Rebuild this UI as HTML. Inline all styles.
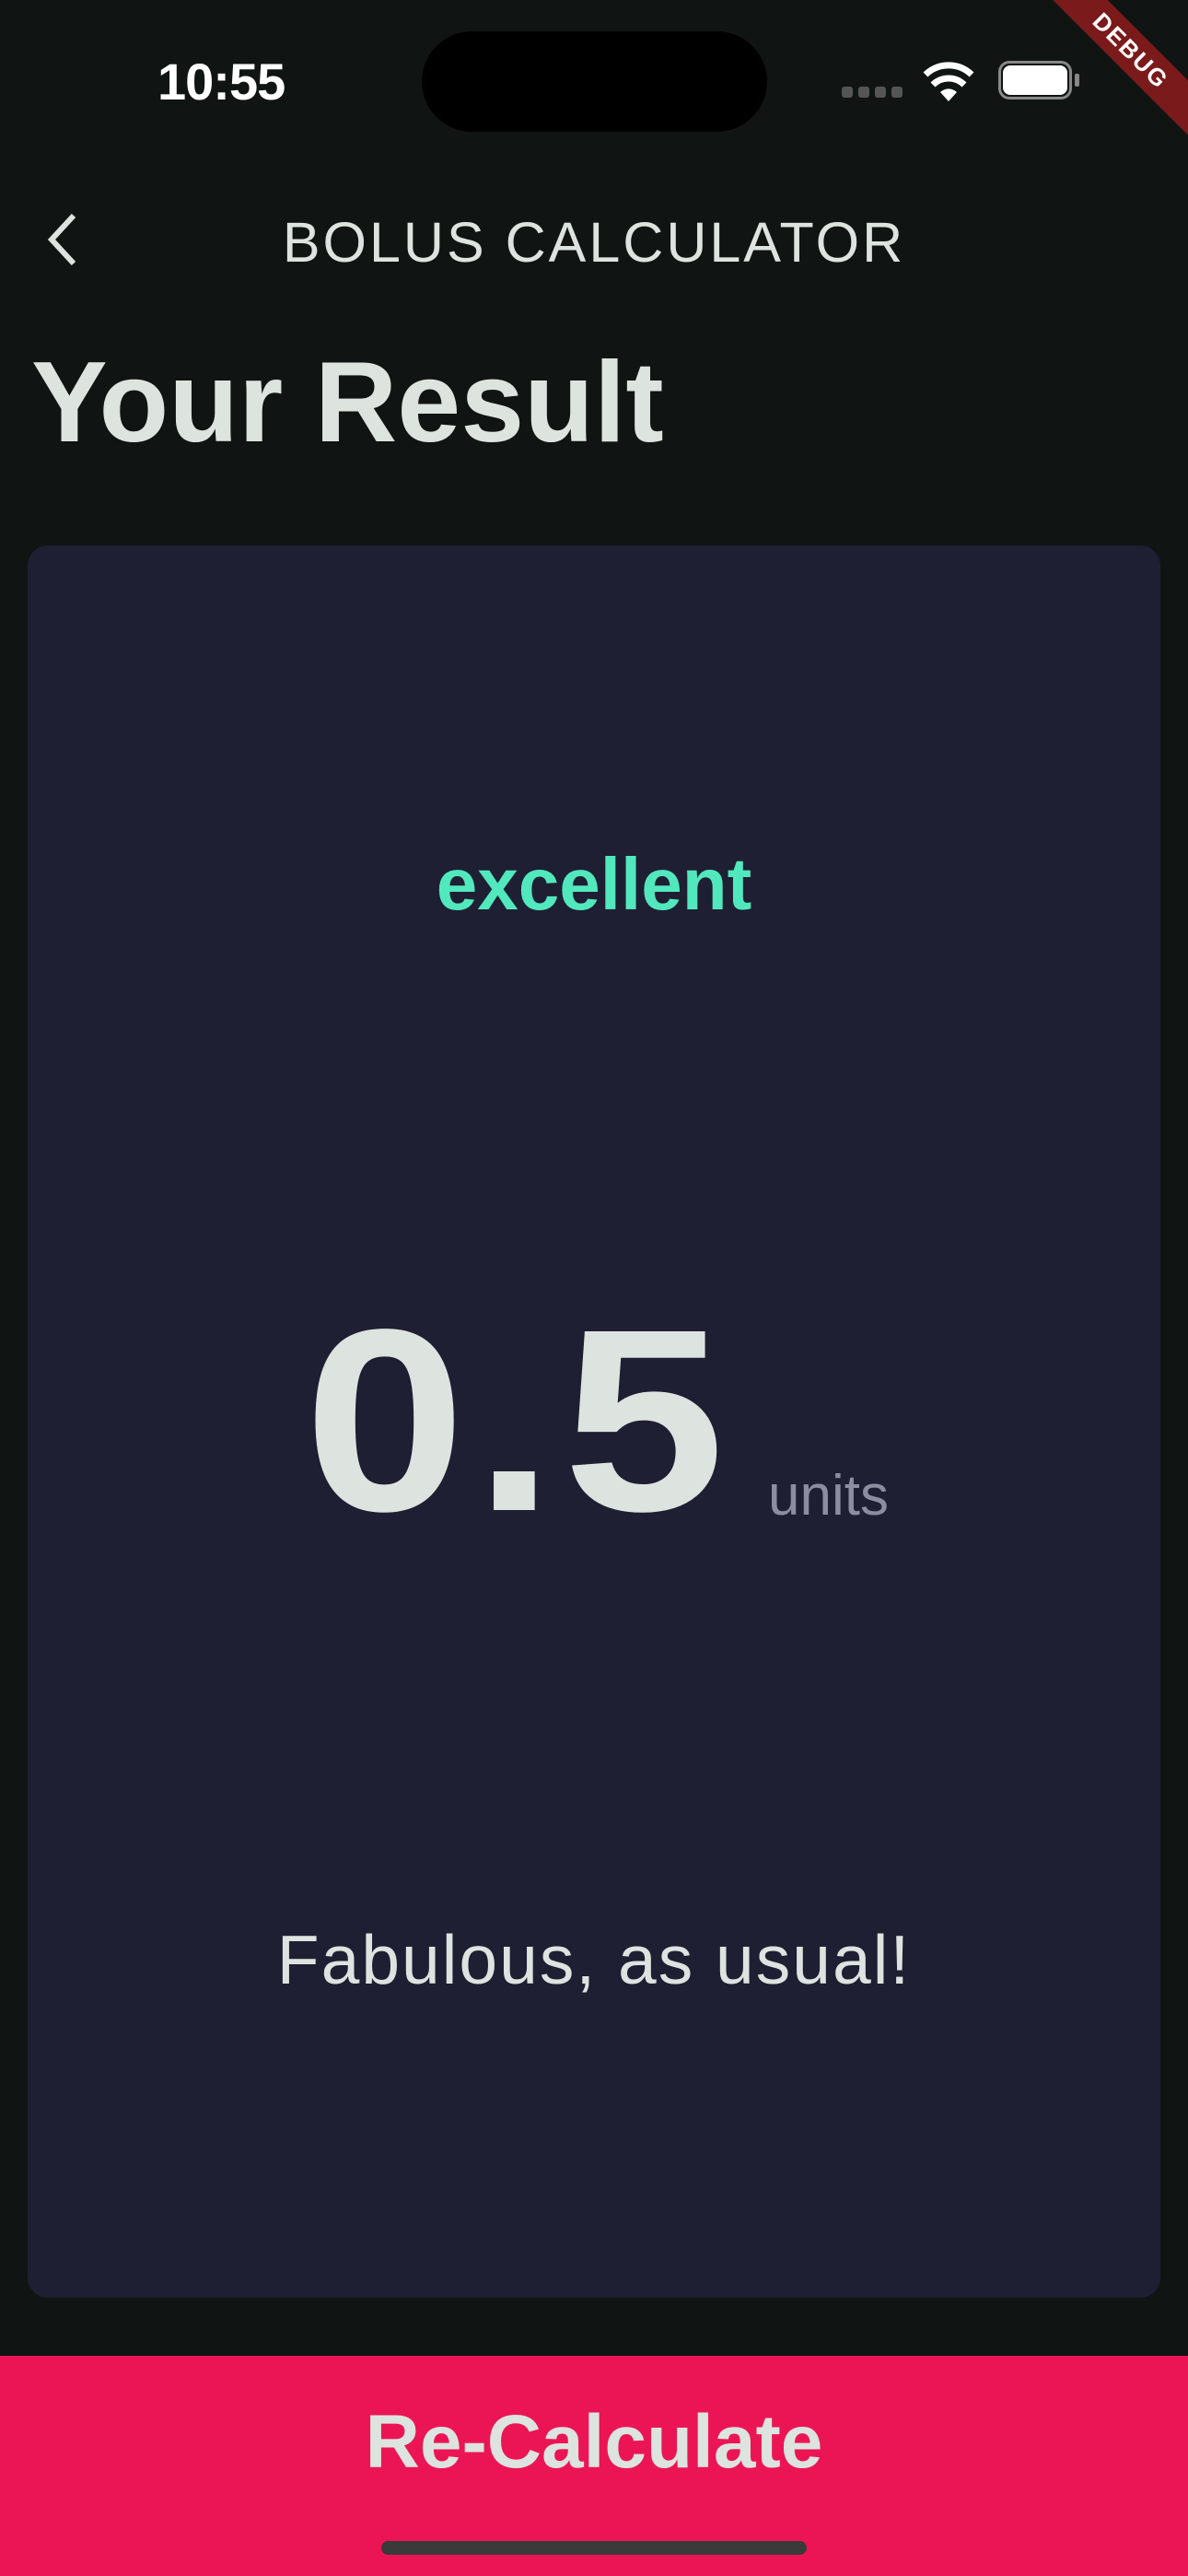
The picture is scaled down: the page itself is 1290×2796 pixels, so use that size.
<!DOCTYPE html>
<html><head><meta charset="utf-8"><style>
html,body{margin:0;padding:0}
body{width:1290px;height:2796px;background:#101513;position:relative;overflow:hidden;font-family:"Liberation Sans",sans-serif;color:#dde3df}
.a{position:absolute}
</style></head><body>
<div class="a" style="left:171px;top:56px;font-size:56px;font-weight:600;color:#fff;letter-spacing:-1px">10:55</div>
<div class="a" style="left:458px;top:34px;width:375px;height:109px;border-radius:55px;background:#000"></div>
<div class="a" style="left:914px;top:94px;width:70px;height:12px;display:flex;gap:6px">
<span style="width:12px;height:12px;border-radius:3px;background:#555"></span><span style="width:12px;height:12px;border-radius:3px;background:#555"></span><span style="width:12px;height:12px;border-radius:3px;background:#555"></span><span style="width:12px;height:12px;border-radius:3px;background:#555"></span></div>
<svg class="a" style="left:1000px;top:64px" width="60" height="46" viewBox="0 0 58 46"><path d="M29 46 L20 36 A13 13 0 0 1 38 36 Z" fill="#fff"/><path d="M12 28 A24 24 0 0 1 46 28" stroke="#fff" stroke-width="7" fill="none"/><path d="M4 17 A36 36 0 0 1 54 17" stroke="#fff" stroke-width="7" fill="none"/></svg>
<div class="a" style="left:1084px;top:66px;width:80px;height:42px;border:3px solid #888;border-radius:12px;box-sizing:border-box"></div>
<div class="a" style="left:1089px;top:71px;width:70px;height:32px;background:#fff;border-radius:8px"></div>
<div class="a" style="left:1167px;top:80px;width:5px;height:14px;background:#888;border-radius:2px"></div>
<div class="a" style="left:1098px;top:34px;width:260px;height:42px;background:#7a1a1a;transform:rotate(45deg);transform-origin:center;color:#fff;font-weight:700;font-size:26px;text-align:center;line-height:42px;letter-spacing:2px">DEBUG</div>
<svg class="a" style="left:44px;top:230px" width="44" height="60" viewBox="0 0 44 60"><path d="M36 4 L12 30 L36 56" stroke="#dde3df" stroke-width="6" fill="none"/></svg>
<div class="a" style="left:0;width:1290px;top:228px;text-align:center;font-size:61px;letter-spacing:3px">BOLUS CALCULATOR</div>
<div class="a" style="left:34px;top:366px;font-size:124px;font-weight:700">Your Result</div>
<div class="a" style="left:30px;top:592px;width:1230px;height:1902px;background:#1e1f33;border-radius:22px"></div>
<div class="a" style="left:0;width:1290px;top:914px;text-align:center;font-size:80px;font-weight:700;color:#52e8bd">excellent</div>
<div class="a" style="left:330px;top:1401px;font-size:282px;font-weight:700;line-height:1;letter-spacing:8px;transform:scaleX(1.12);transform-origin:left top">0.5</div>
<div class="a" style="left:834px;top:1588px;font-size:62px;color:#8c8d9e">units</div>
<div class="a" style="left:0;width:1290px;top:2084px;text-align:center;font-size:75px;letter-spacing:2px">Fabulous, as usual!</div>
<div class="a" style="left:0;top:2557px;width:1290px;height:239px;background:#eb1555"></div>
<div class="a" style="left:0;width:1290px;top:2604px;text-align:center;font-size:82px;font-weight:700">Re-Calculate</div>
<div class="a" style="left:414px;top:2758px;width:462px;height:15px;border-radius:8px;background:#3a3a3a"></div>
</body></html>
